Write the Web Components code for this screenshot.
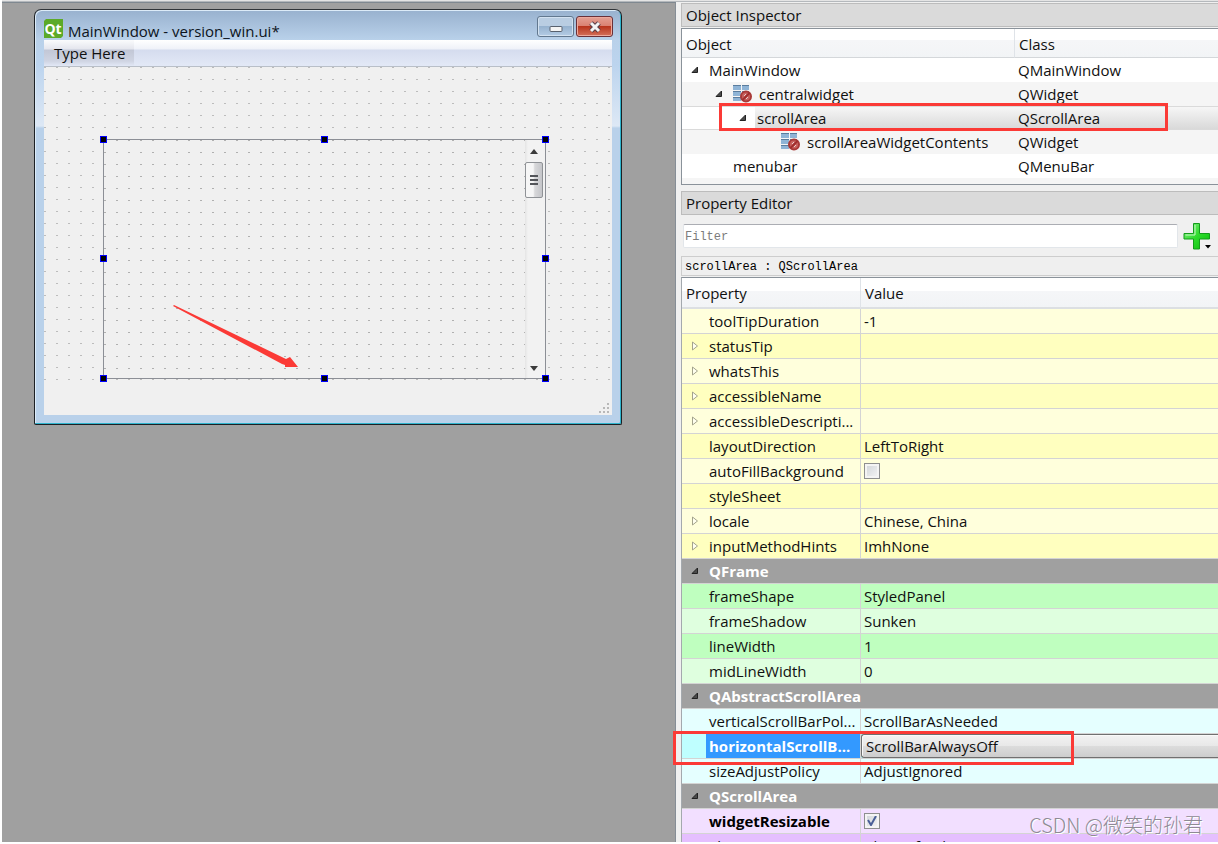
<!DOCTYPE html>
<html lang="en">
<head>
<meta charset="utf-8">
<title>Qt Designer</title>
<style>
  html, body { margin: 0; height: 100%; }
  body { background: #fff; color: #101010; font: 15px/20px "Open Sans", "Noto Sans", "Noto Sans CJK SC", sans-serif; overflow: hidden; }
</style>
</head>
<body>
<designer-app></designer-app>

<template id="t-app">
  <style>
    :host { display: grid; grid-template-columns: minmax(0, 1fr) 542px; grid-template-rows: 2px minmax(0, 1fr); height: 100vh; box-sizing: border-box; padding: 0 0 2px 2px; position: relative; }
    .strip { grid-column: 1 / -1; background: #e4e4e4; border-bottom: 1px solid #b4b8bc; box-sizing: border-box; }
    main { background: #a0a0a0; border-top: 1px solid #7f8890; border-right: 1px solid #868e96; box-sizing: border-box; padding: 6px 0 0 32px; overflow: hidden; }
    aside { background: #f0f0f0; box-sizing: border-box; padding: 1px 0 0 5px; overflow-x: visible; overflow-y: clip; }
    object-tree { margin-bottom: 6px; }
    .filter { display: flex; align-items: center; gap: 5px; padding: 5px 7px 5px 2px; }
    .filter label { flex: 1; display: flex; }
    .filter input { flex: 1; min-width: 0; height: 24px; box-sizing: border-box; border: 1px solid #e2e6ea; border-top-color: #abadb3; border-radius: 2px; padding: 2px 1px 0; font: 12px/20px "Liberation Mono", monospace; background: #fff; color: #222; }
    .filter input::placeholder { color: #7c7c7c; opacity: 1; }
    .filter button { border: 0; padding: 0; background: none; width: 28px; height: 30px; }
    .path { font: 12px/20px "Liberation Mono", monospace; color: #000; background: #efefef; border: 1px solid #cdcdcd; border-right: 0; padding: 0 3px; margin-bottom: 1px; height: 18px; }
    .mark { position: absolute; right: 15px; bottom: 5px; font: 20px/28px "Noto Sans CJK SC", sans-serif; font-weight: 300; color: #8e8a94; text-shadow: 1px 1px 0 #fff; white-space: nowrap; }
  </style>
  <div class="strip"></div>
  <main>
    <form-window>
      <span slot="title">MainWindow - version_win.ui*</span>
      <span slot="menu">Type Here</span>
      <scroll-box></scroll-box>
    </form-window>
  </main>
  <aside>
    <dock-title>Object Inspector</dock-title>
    <object-tree></object-tree>
    <dock-title>Property Editor</dock-title>
    <div class="filter">
      <label><input type="text" placeholder="Filter" aria-label="Filter"></label>
      <button type="button" aria-label="Add dynamic property">
        <svg width="28" height="30" viewBox="0 0 28 30">
          <defs><linearGradient id="g" x1="0" y1="0" x2="1" y2="1"><stop offset="0" stop-color="#8df08a"/><stop offset=".5" stop-color="#2fdc2c"/><stop offset="1" stop-color="#07bd0c"/></linearGradient></defs>
          <path d="M10.500 2.500h6v10h10v5.500h-10v10h-6V18H1v-5.500h9.500z" fill="url(#g)" stroke="#149c1c"/>
          <path d="M12 4v10H2.500" fill="none" stroke="#c6f9c4"/>
          <path d="M22 24h6l-3 3.500z" fill="#000"/>
        </svg>
      </button>
    </div>
    <div class="path">scrollArea : QScrollArea</div>
    <property-table></property-table>
  </aside>
  <div class="mark">CSDN @微笑的孙君</div>
</template>

<template id="t-title">
  <style>
    :host { display: block; height: 24px; box-sizing: border-box; border: 1px solid #bcbcbc; border-right: 0; background: #dadada; padding: 0 4px; line-height: 22px; margin-bottom: 1px; }
  </style>
  <slot></slot>
</template>

<template id="t-window">
  <style>
    :host { display: block; width: 588px; max-width: 100%; box-sizing: border-box; border: 1px solid #1c2024; border-top-color: #303438; border-radius: 7px 7px 2px 2px; background: linear-gradient(#9ab3d0 2px, #b9d1ea 30px, #bcd4ee 55px, #dde8f5 116px, #b9d1ea 118px); box-shadow: inset -1px -1px 0 #2fb4cc, inset 1px 1px 0 #dcebf8; padding: 2px 9px 9px; }
    header { display: flex; height: 28px; }
    header svg.logo { margin: 7px 5px 0 0; }
    .name { flex: 1; padding-top: 9px; line-height: 20px; color: #0c1420; }
    .controls { display: flex; gap: 2px; padding-top: 4px; margin-right: -1px; }
    button { width: 37px; height: 21px; padding: 0; box-sizing: border-box; border: 1px solid #62788f; border-radius: 3px; box-shadow: inset 0 0 0 1px #d2e1f0; background: linear-gradient(#b9cde2 50%, #96b2cf 50%, #b4cce5); display: grid; place-items: center; }
    button.close { border-color: #6a3038; box-shadow: inset 0 0 0 1px #eda99c; background: linear-gradient(#e4a093, #d97f6f 50%, #b8351d 50%, #d4705a); }
    nav { height: 27px; box-sizing: border-box; display: flex; background: linear-gradient(#fff, #eff2f9 9px, #d5dcee 10px, #e2e8f6 25px); border-bottom: 1px solid #b9bfc8; }
    nav a { color: inherit; text-decoration: none; padding: 3px 9px 0 10px; line-height: 21px; background: linear-gradient(#fafbfc, #e4e6ee 9px, #c2c7d6 10px, #cfd4e2 21px, #e2e8f6); }
    .form { background: #f0f0f0 url("data:image/svg+xml,%3Csvg xmlns='http://www.w3.org/2000/svg' width='12' height='12'%3E%3Cpath d='M0 0h2v1H0z' fill='%23bcbcbc'/%3E%3C/svg%3E"); min-height: 313px; }
    footer { height: 35px; background: #f0f0f0; display: flex; justify-content: flex-end; align-items: flex-end; }
  </style>
  <header>
    <svg class="logo" width="19" height="20" viewBox="0 0 19 20" role="img" aria-label="Qt"><path d="M2 0h17v17l-2 2H0V2z" fill="#5caa28"/><text x="9" y="15" font-family="Open Sans, sans-serif" font-size="14" font-weight="700" text-anchor="middle" fill="#fff">Qt</text></svg>
    <div class="name"><slot name="title"></slot></div>
    <div class="controls">
      <button type="button" aria-label="Minimize"><svg width="14" height="10"><rect x="1" y="4.500" width="12" height="5" rx="1" fill="#f4f4f4" stroke="#58616e"/></svg></button>
      <button type="button" class="close" aria-label="Close"><svg width="14" height="12" viewBox="0 0 14 12"><path d="M3 2l8 8M11 2l-8 8" stroke="#5a3f48" stroke-width="5"/><path d="M3 2l8 8M11 2l-8 8" stroke="#f4f4f4" stroke-width="3"/></svg></button>
    </div>
  </header>
  <nav><a href="#"><slot name="menu"></slot></a></nav>
  <div class="form"><slot></slot></div>
  <footer><svg width="14" height="14" viewBox="0 0 14 14" fill="#b8b8b8"><path d="M9 2h2v2H9zM5 6h2v2H5zM9 6h2v2H9zM1 10h2v2H1zM5 10h2v2H5zM9 10h2v2H9z"/></svg></footer>
</template>

<template id="t-scroll">
  <style>
    :host { display: flow-root; }
    .frame { position: relative; box-sizing: border-box; margin: 72px 66px 0 59px; height: 240px; border: 1px solid #8c8f96; background: #f0f0f0 url("data:image/svg+xml,%3Csvg xmlns='http://www.w3.org/2000/svg' width='12' height='12'%3E%3Cpath d='M0 0h2v1H0z' fill='%23b0b0b0'/%3E%3C/svg%3E"); display: flex; justify-content: flex-end; }
    .bar { width: 20px; background: linear-gradient(90deg, #e4e4e4, #f2f2f2 3px, #f2f2f2); display: flex; flex-direction: column; align-items: center; box-sizing: border-box; padding: 9px 2px 7px 0; }
    .thumb { width: 18px; height: 36px; box-sizing: border-box; border: 1px solid #8f9296; border-radius: 2px; background: linear-gradient(90deg, #f6f6f6 45%, #d8d8da 55%, #c4c5c9); margin: 8px 0 auto; display: grid; place-items: center; }
    .h { position: absolute; width: 7px; height: 7px; box-sizing: border-box; border: 1px solid #00f; background: #000; margin: -4px 0 0 -4px; }
    .h.mid-x { left: 50%; }
    .h.end-x { left: 100%; margin-left: -3px; }
    .h.mid-y { top: 50%; }
    .h.end-y { top: 100%; margin-top: -3px; }
    .arrow { position: absolute; left: 69px; top: 165px; }
  </style>
  <div class="frame">
    <div class="bar">
      <svg width="8" height="5"><path d="M0 5L4 0l4 5z" fill="#3c3c3c"/></svg>
      <div class="thumb"><svg width="8" height="10" stroke="#54565a" stroke-width="2"><path d="M0 1h8M0 5h8M0 9h8"/></svg></div>
      <svg width="8" height="5"><path d="M0 0h8L4 5z" fill="#3c3c3c"/></svg>
    </div>
    <svg class="arrow" width="126" height="66"><path d="M0 1L1 0L113 54L117 52L125 62L112 62L112 60L109 59Z" fill="#fb3a36"/></svg>
  </div>
</template>

<template id="t-tree">
  <style>
    :host { display: block; position: relative; height: 157px; box-sizing: border-box; border: 1px solid #8a929a; border-right: 0; background: #fff; }
    .clip { overflow: hidden; height: 100%; }
    table { width: 100%; border-collapse: separate; border-spacing: 0; table-layout: fixed; }
    col.class { width: 204px; }
    th { height: 29px; box-sizing: border-box; font-weight: 400; text-align: left; background: linear-gradient(#fff 40%, #f5f6f8 41%, #f2f4f6); border-bottom: 1px solid #d4d7da; padding: 2px 4px 0; line-height: 20px; }
    th + th { border-left: 1px solid #dfe3e8; }
    td { height: 24px; padding: 0 4px; box-sizing: border-box; line-height: 24px; }
    tr:nth-child(even) td { background: #f5f5f5; }
    .n { display: flex; align-items: center; height: 24px; padding-left: calc(var(--d) * 24px); white-space: nowrap; }
    .n svg.tri { width: 8px; margin: 0 10px 0 5px; flex: none; }
    .n .gap { width: 23px; flex: none; }
    .n svg.lay { margin: 0 7px 2px 0; flex: none; }
    .sel td { background: linear-gradient(90deg, #fff 73px, transparent 73px), linear-gradient(#f6f6f6, #d9d9d9); border-top: 1px solid #dadada; border-bottom: 1px solid #dadada; line-height: 22px; }
    .sel td + td { background: linear-gradient(#f6f6f6, #d9d9d9); }
    .sel .n { height: 22px; }
    .note { position: absolute; left: 37px; top: 74px; right: 50px; height: 28px; box-sizing: border-box; border: 3px solid #fb3a36; pointer-events: none; }
  </style>
  <div class="clip"><table>
    <colgroup><col><col class="class"></colgroup>
    <thead><tr><th>Object</th><th>Class</th></tr></thead>
    <tbody></tbody>
  </table></div>
  <div class="note"></div>
</template>

<template id="t-props">
  <style>
    :host { display: block; border-top: 1px solid #8a929a; border-left: 1px solid #a4a9ae; }
    table { width: 100%; border-collapse: separate; border-spacing: 0; table-layout: fixed; }
    col.name { width: 178px; }
    thead th { height: 31px; box-sizing: border-box; font-weight: 400; text-align: left; background: linear-gradient(#fff 45%, #f5f6f8 46%, #f2f4f6); border-bottom: 2px solid #dcdfe2; padding: 0 4px; line-height: 20px; }
    thead th + th { border-left: 1px solid #dfe3e8; }
    tbody th, tbody td { height: 25px; box-sizing: border-box; padding: 0 0 0 4px; text-align: left; font-weight: 400; border-bottom: 1px solid #d4d4d4; background: var(--c); white-space: nowrap; }
    tbody td { border-left: 1px solid #d4d4d4; padding-left: 3px; }
    tbody th > div { display: flex; align-items: center; height: 24px; }
    tbody th svg { width: 8px; margin: 0 10px 0 5px; flex: none; }
    tbody th .gap { width: 23px; flex: none; }
    .group th { color: #fff; font-weight: 700; background: #a0a0a0; }
    .bold th { font-weight: 700; color: #000; }
    .current th { position: relative; color: #fff; background: linear-gradient(90deg, var(--c) 24px, #3399ff 24px); }
    .current td { padding: 0; }
    select { display: block; appearance: none; width: 100%; height: 24px; box-sizing: border-box; border: 1px solid #707070; border-right: 0; border-radius: 3px 0 0 3px; box-shadow: inset 1px 1px 0 #fafafa; background: linear-gradient(#f2f2f2, #e8e8e8 50%, #dcdcdc 51%, #cdcdcd); padding: 0 4px; font: inherit; color: #101010; }
    input { appearance: none; display: block; margin: 0; width: 16px; height: 16px; border: 1px solid #8e8f8f; background: linear-gradient(135deg, #cfd3d8, #f6f6f6); box-shadow: inset 0 0 0 2px #f4f4f4; }
    input:checked { background: url("data:image/svg+xml,%3Csvg xmlns='http://www.w3.org/2000/svg' viewBox='0 0 14 14'%3E%3Cpath d='M3 6l3 5 5-9' fill='none' stroke='%234a5f97' stroke-width='2'/%3E%3C/svg%3E"), linear-gradient(135deg, #cfd3d8, #f6f6f6); }
    .note { position: absolute; left: -9px; top: -3px; width: 401px; box-sizing: border-box; border: 3px solid #fb3a36; pointer-events: none; z-index: 1; }
    tbody th > div.note { height: 34px; }
  </style>
  <table>
    <colgroup><col class="name"><col></colgroup>
    <thead><tr><th>Property</th><th>Value</th></tr></thead>
    <tbody></tbody>
  </table>
</template>

<script>
  const OPEN = '<svg class="tri" height="8" viewBox="0 0 8 8"><path d="M6.500 1v5.500H1z" fill="#4a4a4a" stroke="#222"/></svg>';
  const SHUT = '<svg class="tri" height="10" viewBox="0 0 8 10"><path d="M1.500 1L6.500 5l-5 4z" fill="#fffff0" stroke="#a3a38c"/></svg>';
  const GAP = '<span class="gap"></span>';
  const LAYOUT = '<svg class="lay" width="19" height="19" viewBox="0 0 19 19">' +
    '<path d="M0 1h8v5H0zM9 1h7v5H9zM0 7h8v5H0zM9 7h7v5H9zM0 13h8v4H0z" fill="#8fb4d6"/>' +
    '<path d="M0 1.500h8M9 1.500h7M0 7.500h8M9 7.500h7M0 13.500h8" stroke="#5b7d9e"/>' +
    '<circle cx="13" cy="12.500" r="5" fill="#c9625e" stroke="#a93a38" stroke-width="2"/>' +
    '<path d="M9.500 16l7-7" stroke="#a02f2e" stroke-width="2"/><path d="M11 12l2-2M13 15l2-2" stroke="#e8d0ce"/></svg>';

  class Base extends HTMLElement {
    constructor() {
      super();
      this.attachShadow({ mode: 'open' }).append(
        document.getElementById(this.constructor.template).content.cloneNode(true));
    }
  }

  customElements.define('dock-title', class extends Base { static template = 't-title'; });
  customElements.define('form-window', class extends Base { static template = 't-window'; });

  customElements.define('scroll-box', class extends Base {
    static template = 't-scroll';
    constructor() {
      super();
      const frame = this.shadowRoot.querySelector('.frame');
      const spots = ['start', 'mid', 'end'];
      for (const y of spots) for (const x of spots) {
        if (x === 'mid' && y === 'mid') continue;
        const h = document.createElement('i');
        h.className = `h ${x}-x ${y}-y`;
        if (x === 'start') h.style.left = 0;
        if (y === 'start') h.style.top = 0;
        frame.append(h);
      }
    }
  });

  customElements.define('object-tree', class extends Base {
    static template = 't-tree';
    constructor() {
      super();
      const rows = [
        [0, 'MainWindow', 'QMainWindow', 1, 0],
        [1, 'centralwidget', 'QWidget', 1, 1],
        [2, 'scrollArea', 'QScrollArea', 1, 0, 1],
        [3, 'scrollAreaWidgetContents', 'QWidget', 0, 1],
        [1, 'menubar', 'QMenuBar', 0, 0],
        [1, 'statusbar', '', 0, 0]
      ];
      this.shadowRoot.querySelector('tbody').innerHTML = rows.map(([d, n, c, open, icon, sel]) =>
        `<tr class="${sel ? 'sel' : ''}"><td><div class="n" style="--d:${d}">${open ? OPEN : GAP}${icon ? LAYOUT : ''}${n}</div></td><td>${c}</td></tr>`).join('');
    }
  });

  customElements.define('property-table', class extends Base {
    static template = 't-props';
    constructor() {
      super();
      const Y = '#ffffdc', Y2 = '#ffffbf', G = '#dfffdf', G2 = '#bfffbf', C = '#e5ffff', C2 = '#bfffff', V = '#f2dfff', V2 = '#e5bfff';
      const box = (name, on) => `<input type="checkbox" aria-label="${name}" ${on ? 'checked' : ''}>`;
      const rows = [
        ['toolTipDuration', '-1', Y], ['statusTip', '', Y2, SHUT], ['whatsThis', '', Y, SHUT],
        ['accessibleName', '', Y2, SHUT], ['accessibleDescripti...', '', Y, SHUT],
        ['layoutDirection', 'LeftToRight', Y2], ['autoFillBackground', box('autoFillBackground'), Y],
        ['styleSheet', '', Y2], ['locale', 'Chinese, China', Y, SHUT], ['inputMethodHints', 'ImhNone', Y2, SHUT],
        ['QFrame'],
        ['frameShape', 'StyledPanel', G2], ['frameShadow', 'Sunken', G], ['lineWidth', '1', G2], ['midLineWidth', '0', G],
        ['QAbstractScrollArea'],
        ['verticalScrollBarPol...', 'ScrollBarAsNeeded', C],
        ['horizontalScrollB...', '<select aria-label="horizontalScrollBarPolicy"><option>ScrollBarAlwaysOff</option></select>', C2, '', 'bold current'],
        ['sizeAdjustPolicy', 'AdjustIgnored', C],
        ['QScrollArea'],
        ['widgetResizable', box('widgetResizable', true), V, '', 'bold'],
        ['alignment', 'AlignLeft, AlignVCenter', V2]
      ];
      this.shadowRoot.querySelector('tbody').innerHTML = rows.map(([n, v, c, tri, cls = '']) => v === undefined
        ? `<tr class="group"><th colspan="2"><div>${OPEN}${n}</div></th></tr>`
        : `<tr class="${cls}" style="--c:${c}"><th scope="row"><div>${tri || GAP}${n}</div>${cls.includes('current') ? '<div class="note"></div>' : ''}</th><td>${v}</td></tr>`).join('');
    }
  });

  customElements.define('designer-app', class extends Base { static template = 't-app'; });
</script>
</body>
</html>
